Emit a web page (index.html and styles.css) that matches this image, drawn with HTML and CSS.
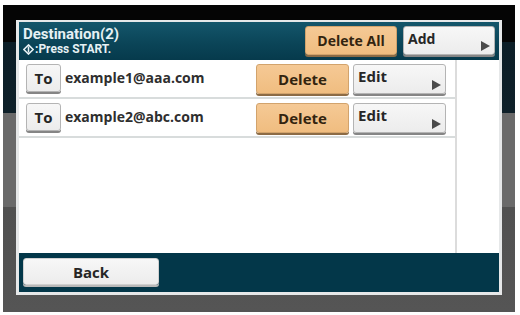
FILE: index.html
```html
<!DOCTYPE html>
<html>
<head>
<meta charset="utf-8">
<link rel="stylesheet" href="styles.css">
</head>
<body>
<div class="screen">
  <div class="dialog">
    <div class="header">
      <div class="titles">
        <div class="title">Destination(2)</div>
        <div class="subtitle"><svg class="start-icon" width="11" height="11" viewBox="0 0 10 10"><path d="M5 0.8 L9.2 5 L5 9.2 L0.8 5 Z" fill="none" stroke="#e8f2f5" stroke-width="1.3"/><path d="M5 2.2 V7.8" stroke="#e8f2f5" stroke-width="1.4"/></svg>:Press START.</div>
      </div>
      <div class="header-actions">
        <button class="btn btn-orange btn-wide">Delete All</button>
        <button class="btn btn-gray btn-wide btn-arrow">Add</button>
      </div>
    </div>
    <div class="body">
      <div class="list">
        <div class="row">
          <button class="btn btn-gray btn-to">To</button>
          <span class="email">example1@aaa.com</span>
          <div class="row-actions">
            <button class="btn btn-orange btn-row">Delete</button>
            <button class="btn btn-gray btn-row btn-arrow">Edit</button>
          </div>
        </div>
        <div class="row">
          <button class="btn btn-gray btn-to">To</button>
          <span class="email">example2@abc.com</span>
          <div class="row-actions">
            <button class="btn btn-orange btn-row">Delete</button>
            <button class="btn btn-gray btn-row btn-arrow">Edit</button>
          </div>
        </div>
      </div>
      <div class="side"></div>
    </div>
    <div class="footer">
      <button class="btn btn-gray btn-back">Back</button>
    </div>
  </div>
</div>
</body>
</html>
```
FILE: styles.css
```css
* { box-sizing: border-box; }
html, body { margin: 0; padding: 0; background: #ffffff; }
body { width: 520px; height: 315px; overflow: hidden; font-family: "Open Sans", "Liberation Sans", sans-serif; }

.screen {
  margin: 5px 5px 3px 3px;
  width: 512px;
  height: 307px;
  padding: 15px 13px 17px 13px;
  background: linear-gradient(to bottom,
    #050505 0px, #050505 37px,
    #0c1e27 37px, #0e2029 108px,
    #6a6a6a 108px, #6a6a6a 202px,
    #515151 202px, #555555 307px);
}

.dialog {
  width: 486px;
  height: 275px;
  border: 3px solid #e6e8e9;
  border-top-width: 2px;
  display: flex;
  flex-direction: column;
  background: #ffffff;
}

.header {
  height: 38px;
  flex: none;
  background: linear-gradient(to bottom, #14566b 0%, #0b4558 55%, #063a4c 100%);
  display: flex;
  align-items: flex-start;
  justify-content: space-between;
  padding: 4px 4px 0 4px;
}
.titles { color: #e6f1f4; font-family: Roboto, "Open Sans", sans-serif; font-weight: 700; padding-top: 0; }
.title { font-size: 15px; line-height: 17px; }
.subtitle { font-size: 12px; line-height: 13px; display: flex; align-items: center; margin-top: 0; }
.start-icon { margin-right: 1px; }

.header-actions { display: flex; gap: 6px; }

.btn {
  font-family: "Open Sans", "Liberation Sans", sans-serif;
  font-weight: 700;
  border-radius: 3px;
  padding: 0;
  margin: 0;
  position: relative;
  display: flex;
  align-items: center;
  font-size: 14px;
}
.btn-orange {
  background: linear-gradient(to bottom, #f5c995 0%, #f0bd80 100%);
  border: 1px solid #d2a36c;
  box-shadow: 0 2px 0 #8c6b45;
  color: #33240f;
  justify-content: center;
}
.btn-gray {
  background: linear-gradient(to bottom, #f7f7f7 0%, #ececec 100%);
  border: 1px solid #b4b4b4;
  box-shadow: 0 2px 0 #858585;
  color: #262626;
  justify-content: center;
}
.btn-arrow { justify-content: flex-start; padding-left: 4px; padding-bottom: 4px; }
.btn-arrow::after {
  content: "";
  position: absolute;
  right: 4px;
  bottom: 3px;
  width: 0;
  height: 0;
  border-top: 5px solid transparent;
  border-bottom: 5px solid transparent;
  border-left: 9px solid #4a4a4a;
}
.btn-wide { width: 92px; height: 29px; }
.header-actions .btn-orange { padding-bottom: 1px; }

.body { flex: 1; display: flex; min-height: 0; }
.list { width: 438px; border-right: 2px solid #dcdcdc; }
.side { flex: 1; background: #ffffff; }

.row {
  height: 39px;
  border-bottom: 2px solid #d8dcdc;
  display: flex;
  align-items: flex-start;
  padding: 4px 9px 0 7px;
}
.btn-to { width: 35px; height: 28px; font-size: 15px; margin-top: 0; }
.email {
  margin-left: 4px;
  font-size: 14px;
  font-weight: 700;
  color: #2e2e2e;
  line-height: 28px;
  flex: 1;
}
.row-actions { display: flex; gap: 4px; }
.btn-row { width: 93px; height: 30px; font-size: 15px; }
.row-actions .btn-orange { padding-bottom: 1px; }
.row-actions .btn-arrow { padding-bottom: 6px; }

.footer {
  height: 39px;
  flex: none;
  background: #033749;
  padding: 5px 4px 0 4px;
  display: flex;
  align-items: flex-start;
}
.btn-back { width: 136px; height: 27px; font-size: 15px; border-color: #d0d0d0; box-shadow: 0 2px 0 #b9b9b9; }
```
